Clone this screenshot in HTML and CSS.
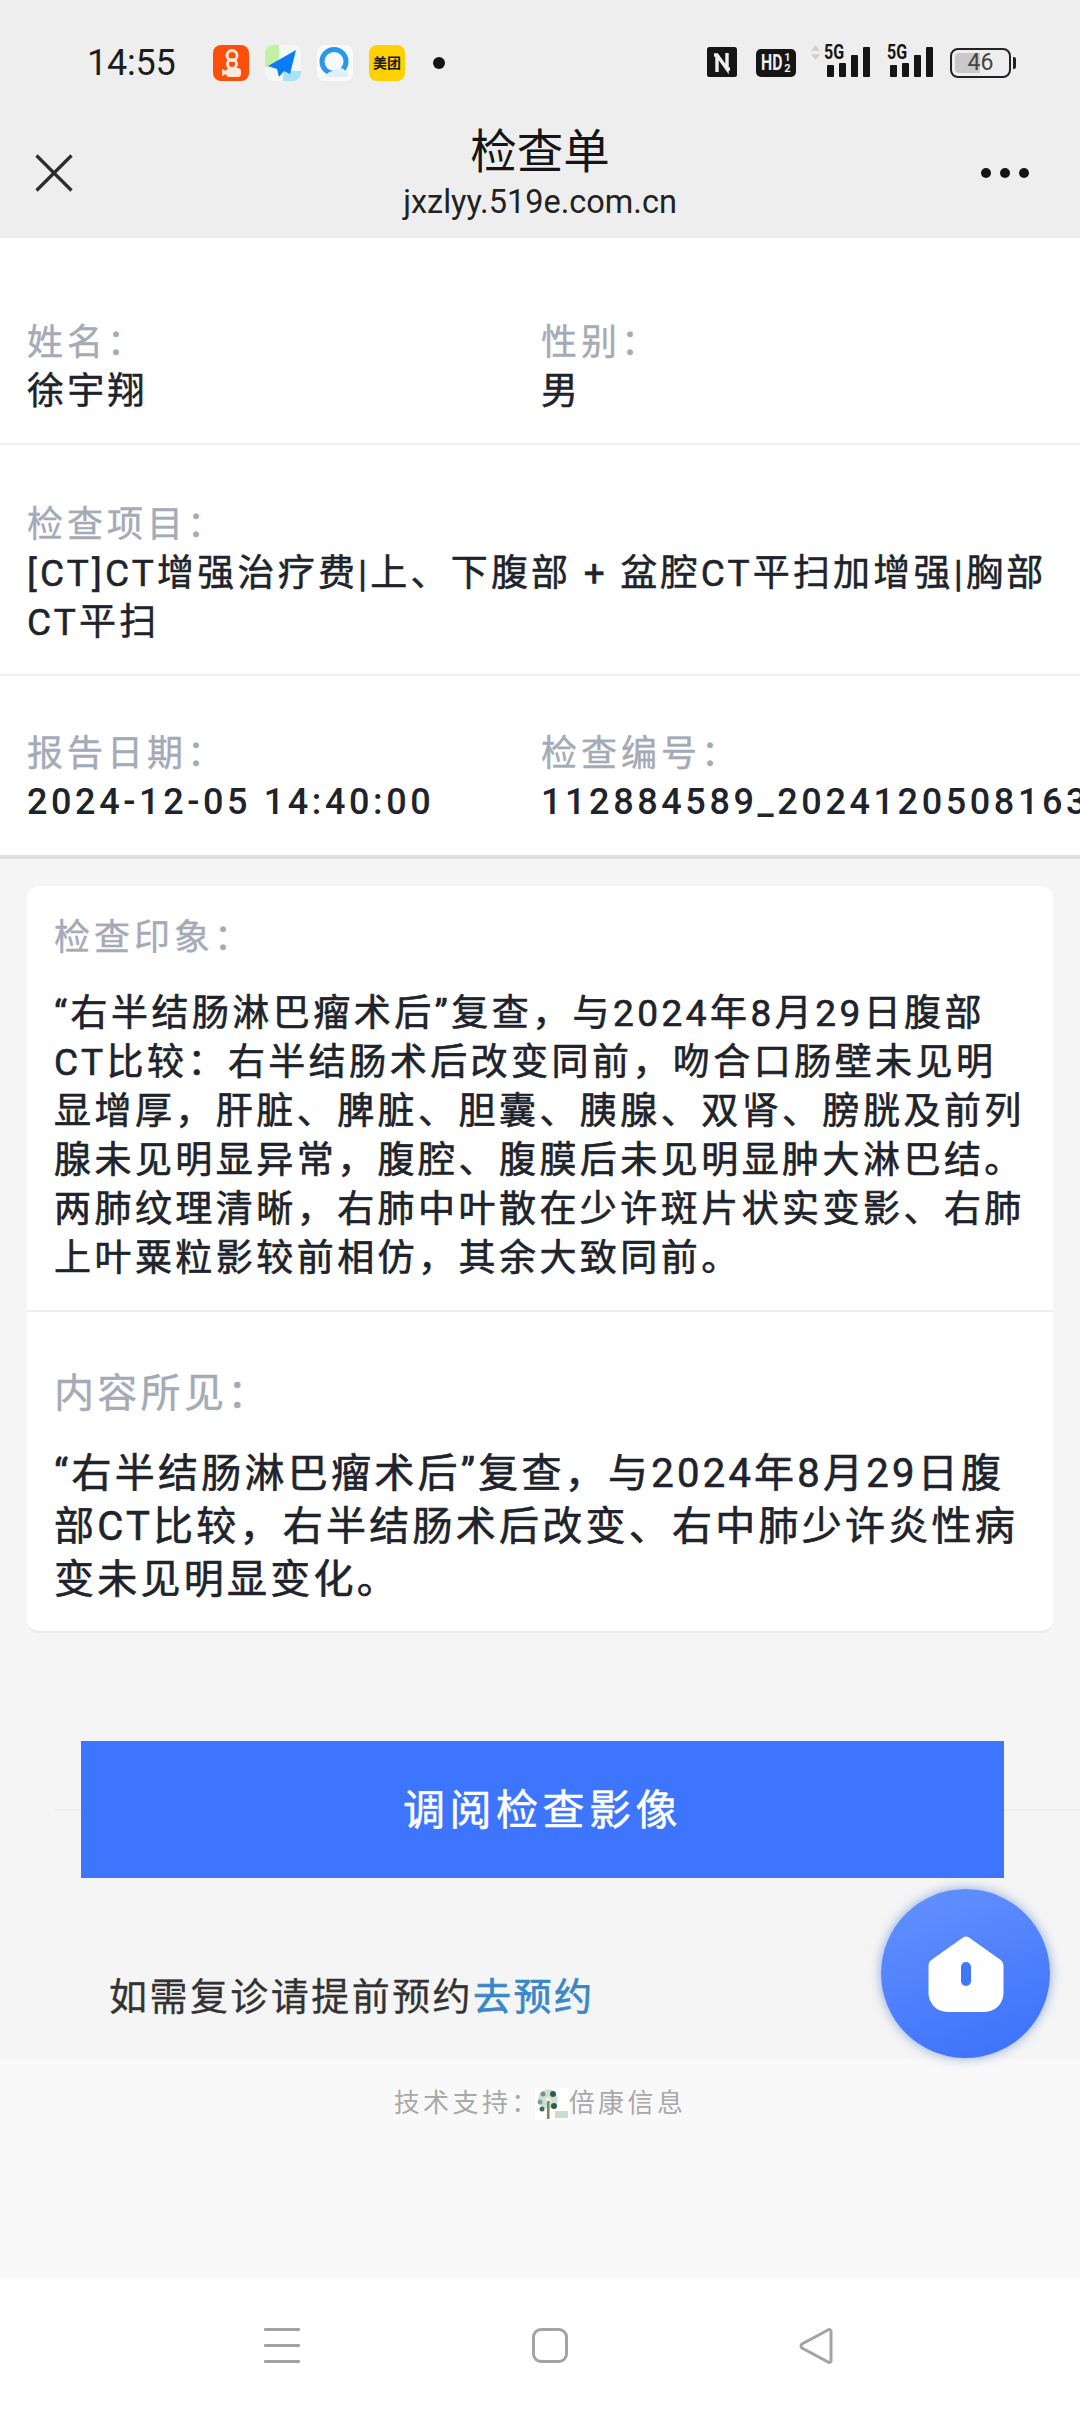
FILE: index.html
```html
<!DOCTYPE html>
<html lang="zh-CN">
<head>
<meta charset="utf-8">
<title>检查单</title>
<link rel="stylesheet" href="styles.css">
</head>
<body>
<div class="screen">
  <header class="chrome">
    <div class="status">
      <div class="status-left">
        <span class="time">14:55</span>
        <div class="apps">
          <svg class="app" viewBox="0 0 36 36"><rect width="36" height="36" rx="8" fill="#fe4f0a"/><g fill="none" stroke="#ffe9dd" stroke-width="3"><circle cx="19" cy="10.500" r="5"/><circle cx="19" cy="19" r="4.500"/></g><path d="M9 24l4 2v3l-4 2z" fill="#ffe9dd"/><rect x="13" y="23" width="15" height="9" rx="3.500" fill="#ffe9dd"/></svg>
          <svg class="app" viewBox="0 0 36 36"><rect width="36" height="36" rx="8" fill="#f3f8f6"/><path d="M0 8a8 8 0 0 1 8-8h6v22H0z" fill="#c3f0a4"/><path d="M18 26h18v2a8 8 0 0 1-8 8H18z" fill="#a6e3fb"/><path d="M31 5L3 21l9 3 2 8 5-6 6 3z" fill="#0b7cf5"/></svg>
          <svg class="app" viewBox="0 0 36 36"><rect width="36" height="36" rx="8" fill="#f8fbfe"/><circle cx="17" cy="16.500" r="12" fill="none" stroke="#2a97ea" stroke-width="5"/><path d="M8 32c2-5 6-6 10-6 2-4 9-4 10 0 3 0 4 4 2 6z" fill="#e3eff8"/></svg>
          <svg class="app" viewBox="0 0 36 36"><rect width="36" height="36" rx="8" fill="#ffd100"/><text class="meituan" x="18" y="23">美团</text></svg>
          <span class="notif-dot"></span>
        </div>
      </div>
      <div class="status-right">
        <svg class="nfc" viewBox="0 0 30 30"><rect width="30" height="30" rx="2.500" fill="#151515"/><path d="M7 8h3l10 14V6M10 8v17M20 22h3" fill="none" stroke="#eee" stroke-width="3.400"/></svg>
        <span class="hd"><span class="hd-main">HD</span><span class="hd-sub"><i>1</i><i>2</i></span></span>
        <div class="net">
          <svg class="arrows" viewBox="0 0 12 16"><path d="M6 0l5 6H1zM6 16l-5-6h10z" fill="#cfcfcf"/></svg>
          <div class="sig"><span class="g5">5G</span><div class="bars"><i class="b1"></i><i class="b2"></i><i class="b3"></i><i class="b4"></i></div></div>
        </div>
        <div class="sig"><span class="g5">5G</span><div class="bars"><i class="b1"></i><i class="b2"></i><i class="b3"></i><i class="b4"></i></div></div>
        <div class="battery"><div class="batt-body"><span class="batt-fill"></span><span class="batt-num">46</span></div><span class="batt-cap"></span></div>
      </div>
    </div>
    <div class="titlebar">
      <svg class="close" viewBox="0 0 38 38"><path d="M1.500 1.500l35 35M36.500 1.500l-35 35" stroke="#2d2d2d" stroke-width="3.200" fill="none"/></svg>
      <div class="titles"><div class="title">检查单</div><div class="url">jxzlyy.519e.com.cn</div></div>
      <div class="more"><i></i><i></i><i></i></div>
    </div>
  </header>

  <section class="info">
    <div class="row row-name">
      <div class="cell"><div class="lab">姓名：</div><div class="val">徐宇翔</div></div>
      <div class="cell"><div class="lab">性别：</div><div class="val">男</div></div>
    </div>
    <div class="row row-item">
      <div class="cell full"><div class="lab">检查项目：</div><div class="val">[CT]CT增强治疗费|上、下腹部 + 盆腔CT平扫加增强|胸部CT平扫</div></div>
    </div>
    <div class="row row-date">
      <div class="cell"><div class="lab">报告日期：</div><div class="val num">2024-12-05 14:40:00</div></div>
      <div class="cell"><div class="lab">检查编号：</div><div class="val num nowrap">112884589_20241205081633</div></div>
    </div>
  </section>

  <main class="body">
    <section class="card">
      <div class="block b-imp">
        <div class="card-lab">检查印象：</div>
        <p class="text">“右半结肠淋巴瘤术后”复查，与2024年8月29日腹部CT比较：右半结肠术后改变同前，吻合口肠壁未见明显增厚，肝脏、脾脏、胆囊、胰腺、双肾、膀胱及前列腺未见明显异常，腹腔、腹膜后未见明显肿大淋巴结。两肺纹理清晰，右肺中叶散在少许斑片状实变影、右肺上叶粟粒影较前相仿，其余大致同前。</p>
      </div>
      <div class="block b-see">
        <div class="card-lab big">内容所见：</div>
        <p class="text big">“右半结肠淋巴瘤术后”复查，与2024年8月29日腹部CT比较，右半结肠术后改变、右中肺少许炎性病变未见明显变化。</p>
      </div>
    </section>

    <div class="action">
      <div class="hairline"></div>
      <button class="btn">调阅检查影像</button>
    </div>
    <div class="revisit">如需复诊请提前预约<a class="link">去预约</a></div>
  </main>

  <footer class="support">
    <span>技术支持：</span>
    <svg class="tree" viewBox="0 0 34 32"><rect width="34" height="32" fill="#fff"/><circle cx="13" cy="11" r="10" fill="#cfe0d3"/><circle cx="8" cy="6" r="2.500" fill="#6f9a7e"/><circle cx="18" cy="6" r="3" fill="#37584c"/><circle cx="5" cy="14" r="2.500" fill="#7da68c"/><circle cx="19" cy="18" r="3" fill="#2d5c50"/><circle cx="7" cy="21" r="2.500" fill="#3f6f5c"/><circle cx="13" cy="12" r="2.500" fill="#e8f2ea"/><rect x="12" y="13" width="2.500" height="18" fill="#7d8a50"/><rect x="20" y="23" width="13" height="7" fill="#c6dfd0"/></svg>
    <span>倍康信息</span>
  </footer>

  <nav class="navbar">
    <div class="menu-ic"><i></i><i></i><i></i></div>
    <span class="square-ic"></span>
    <svg class="back-ic" viewBox="0 0 34 36"><path d="M29 2L3 16a2.500 2.500 0 0 0 0 4L29 34a1.800 1.800 0 0 0 3-1.500v-29A1.800 1.800 0 0 0 29 2z" fill="none" stroke="#a3a3a3" stroke-width="3"/></svg>
  </nav>

  <a class="fab">
    <svg viewBox="0 0 76 76"><path d="M38 0.500a5 5 0 0 1 3 1l31 22a8 8 0 0 1 3.500 6.500v27a19 19 0 0 1-19 19h-37a19 19 0 0 1-19-19v-27a8 8 0 0 1 3.500-6.500l31-22a5 5 0 0 1 3-1z" fill="#fff"/><rect x="33" y="26" width="10" height="24" rx="5" fill="#3f77f6"/></svg>
  </a>
</div>
</body>
</html>
```
FILE: styles.css
```css
*{box-sizing:border-box}
html,body{margin:0;padding:0}
body{font-family:Roboto,"Noto Sans CJK SC",sans-serif;background:#f5f5f5;color:#20232b}
.screen{position:relative;width:1080px;height:2412px;overflow:hidden;display:flex;flex-direction:column;background:#f5f5f5}

.chrome{height:238px;background:#eeeeee;flex:none}
.status{height:124px;display:flex;justify-content:space-between;align-items:flex-start;padding:45px 0 0 87px}
.status-left{display:flex;align-items:center;height:36px}
.time{font-size:36px;color:#1c1c1c;width:126px;line-height:36px;letter-spacing:-.2px}
.apps{display:flex;align-items:center;gap:16px}
.app{width:36px;height:36px;display:block}
.meituan{font:700 14px "Noto Sans CJK SC",sans-serif;text-anchor:middle;fill:#1a1a1a}
.notif-dot{width:12px;height:12px;border-radius:50%;background:#141414;margin-left:12px}
.status-right{display:flex;align-items:flex-start;padding-right:64px}
.nfc{width:30px;height:30px;margin-top:2px;display:block}
.hd{margin-left:19px;width:40px;height:28px;margin-top:4px;background:#151515;border-radius:5px;color:#eee;display:flex;align-items:center;justify-content:center;font-family:Roboto,sans-serif;font-weight:700}
.hd-main{font-size:22px;line-height:28px;transform:scaleX(.72);transform-origin:left;width:23px}
.hd-sub{display:flex;flex-direction:column;font-size:11px;line-height:11px}
.hd-sub i{font-style:normal}
.net{position:relative;margin-left:14px;padding-left:14px}
.arrows{position:absolute;left:0;top:0;width:11px;height:15px}
.sig{position:relative;width:46px;height:32px}
.g5{position:absolute;left:0;top:-1px;font:700 20px/17px Roboto,sans-serif;color:#151515;transform:scaleX(.8);transform-origin:left}
.bars{position:absolute;left:3px;right:0;bottom:0;height:30px;display:flex;gap:5px;align-items:flex-end}
.bars i{display:block;width:7px;background:#151515;border-radius:1px}
.bars .b1,.bars .b2{height:12px}
.bars .b2{height:14px}
.bars .b3{height:22px}
.bars .b4{height:30px}
.net+.sig{margin-left:17px}
.battery{margin-left:17px;margin-top:3px;display:flex;align-items:center;height:30px}
.batt-body{position:relative;width:61px;height:30px;border:2.500px solid #232323;border-radius:8px;overflow:hidden}
.batt-fill{position:absolute;left:3px;top:3px;bottom:3px;width:25px;background:#c9c9c9;border-radius:4px 0 0 4px}
.batt-num{position:absolute;inset:0;text-align:center;font:400 23px/25px Roboto,sans-serif;color:#444}
.batt-cap{width:3px;height:12px;background:#232323;margin-left:2px;border-radius:0 2px 2px 0}

.titlebar{height:114px;position:relative}
.close{position:absolute;left:35px;top:30px;width:38px;height:38px}
.titles{text-align:center;padding-top:3px}
.title{font-size:46.500px;line-height:50px;color:#151515}
.url{font-size:32.500px;line-height:36px;color:#222;margin-top:7px}
.more{position:absolute;left:981px;top:44px;display:flex;gap:9px}
.more i{width:10px;height:10px;border-radius:50%;background:#151515;display:block}

.info{background:#fff;flex:none;height:621px;display:flex;flex-direction:column;border-bottom:4px solid #dfdfdf}
.row{display:flex;border-bottom:2px solid #eeeeee;padding-left:27px}
.row-name{height:207px;padding-top:81px}
.row-item{height:231px;padding-top:56px}
.row-date{height:179px;padding-top:55px;border-bottom:0}
.cell{width:514px;flex:none}
.cell.full{width:1026px}
.lab{font-size:36px;line-height:48px;color:#a5aab7;letter-spacing:4px;-webkit-text-stroke:.4px #a5aab7}
.row-date .lab{line-height:47px}
.val{font-size:37px;line-height:49px;color:#20232b;letter-spacing:3.200px;-webkit-text-stroke:.5px #20232b}
.val.num{font-size:36px;letter-spacing:3.600px;font-weight:500;-webkit-text-stroke:0}
.nowrap{white-space:nowrap}

.body{flex:1;padding:27px 27px 0;position:relative}
.card{background:#fff;border-radius:12px;height:747px;border-bottom:2px solid #ebebeb}
.block{padding:0 27px}
.b-imp{height:426px;padding-top:27px;border-bottom:2px solid #eeeeee}
.b-see{padding-top:55px}
.card-lab{font-size:36px;line-height:50px;color:#a5aab7;letter-spacing:4px;-webkit-text-stroke:.4px #a5aab7}
.card-lab.big{font-size:40px;line-height:54px;letter-spacing:3.300px}
.text{margin:26px 0 0;font-size:37px;line-height:49px;color:#20232b;letter-spacing:3.450px;-webkit-text-stroke:.6px #20232b}
.text.big{font-size:40px;line-height:53px;letter-spacing:3.250px;margin-top:26px}

.action{position:relative;height:137px;margin-top:108px;padding:0 54px}
.hairline{position:absolute;left:28px;right:-27px;top:68px;height:2px;background:#ededed}
.btn{position:relative;display:block;width:923px;height:137px;border:0;background:#3d75fe;color:#fff;font:400 42px Roboto,"Noto Sans CJK SC",sans-serif;letter-spacing:4.500px;border-radius:0;padding:0 0 6px;-webkit-text-stroke:.5px #fff}
.revisit{margin-top:92px;padding-left:82px;font-size:38px;line-height:54px;color:#333;letter-spacing:2.450px;-webkit-text-stroke:.3px #333}
.link{color:#3a87c8;-webkit-text-stroke:.7px #3a87c8}

.support{height:219px;flex:none;background:#f9f9f9;display:flex;justify-content:center;align-items:flex-start;padding-top:27px;font-size:26px;line-height:34px;color:#a9a9a9;letter-spacing:3.400px}
.tree{width:34px;height:32px;margin-top:2px;margin-left:-6px;flex:none}

.navbar{height:134px;flex:none;background:#fff;display:flex;align-items:flex-start;padding:50px 0 0 264px}
.menu-ic{width:36px;height:35px;display:flex;flex-direction:column;justify-content:space-between}
.menu-ic i{display:block;height:3px;background:#a3a3a3;border-radius:1px}
.square-ic{width:36px;height:35px;border:3px solid #a3a3a3;border-radius:9px;margin-left:232px}
.back-ic{width:34px;height:36px;margin-left:231px}

.fab{position:absolute;left:881px;top:1889px;width:169px;height:169px;border-radius:50%;background:linear-gradient(160deg,#6592fe,#3a70fb);box-shadow:0 0 12px rgba(50,100,200,.55);display:flex;align-items:center;justify-content:center}
.fab svg{width:76px;height:76px;display:block}
```
